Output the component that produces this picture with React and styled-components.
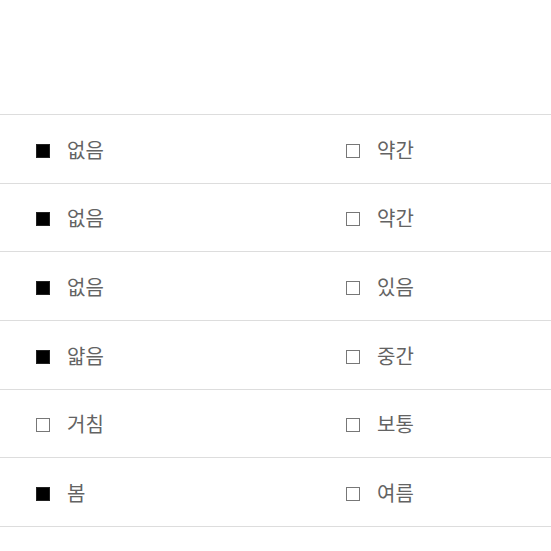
import styled, { createGlobalStyle } from "styled-components";

const GlobalStyle = createGlobalStyle`
  body {
    margin: 0;
    background: #fff;
    font-family: "Noto Sans CJK KR", "Noto Sans", sans-serif;
  }
`;

const rows = [
  [{ on: true, label: "없음" }, { on: false, label: "약간" }],
  [{ on: true, label: "없음" }, { on: false, label: "약간" }],
  [{ on: true, label: "없음" }, { on: false, label: "있음" }],
  [{ on: true, label: "얇음" }, { on: false, label: "중간" }],
  [{ on: false, label: "거침" }, { on: false, label: "보통" }],
  [{ on: true, label: "봄" }, { on: false, label: "여름" }],
];

const Page = styled.div`
  padding-top: 114px;
  overflow: hidden;
`;

const List = styled.div`
  border-top: 1.5px solid #dddddd;
`;

const Row = styled.div`
  display: grid;
  grid-template-columns: 310px 1fr;
  align-items: center;
  box-sizing: border-box;
  height: 68.67px;
  padding-left: 36px;
  padding-top: 2px;
  border-bottom: 1.5px solid #dddddd;
`;

const Option = styled.div`
  display: flex;
  align-items: center;
  gap: 17px;
`;

const Box = styled.span`
  display: inline-block;
  box-sizing: border-box;
  width: 14px;
  height: 14px;
  margin-top: 2px;
  background: ${(p) => (p.on ? "#000" : "#fff")};
  border: 1.5px solid ${(p) => (p.on ? "#222" : "#777")};
`;

const Label = styled.span`
  font-size: 20px;
  color: #636363;
  line-height: 1;
`;

export default function App() {
  return (
    <Page>
      <GlobalStyle />
      <List>
        {rows.map((r, i) => (
          <Row key={i}>
            {r.map((o, j) => (
              <Option key={j}>
                <Box on={o.on} />
                <Label>{o.label}</Label>
              </Option>
            ))}
          </Row>
        ))}
      </List>
    </Page>
  );
}
